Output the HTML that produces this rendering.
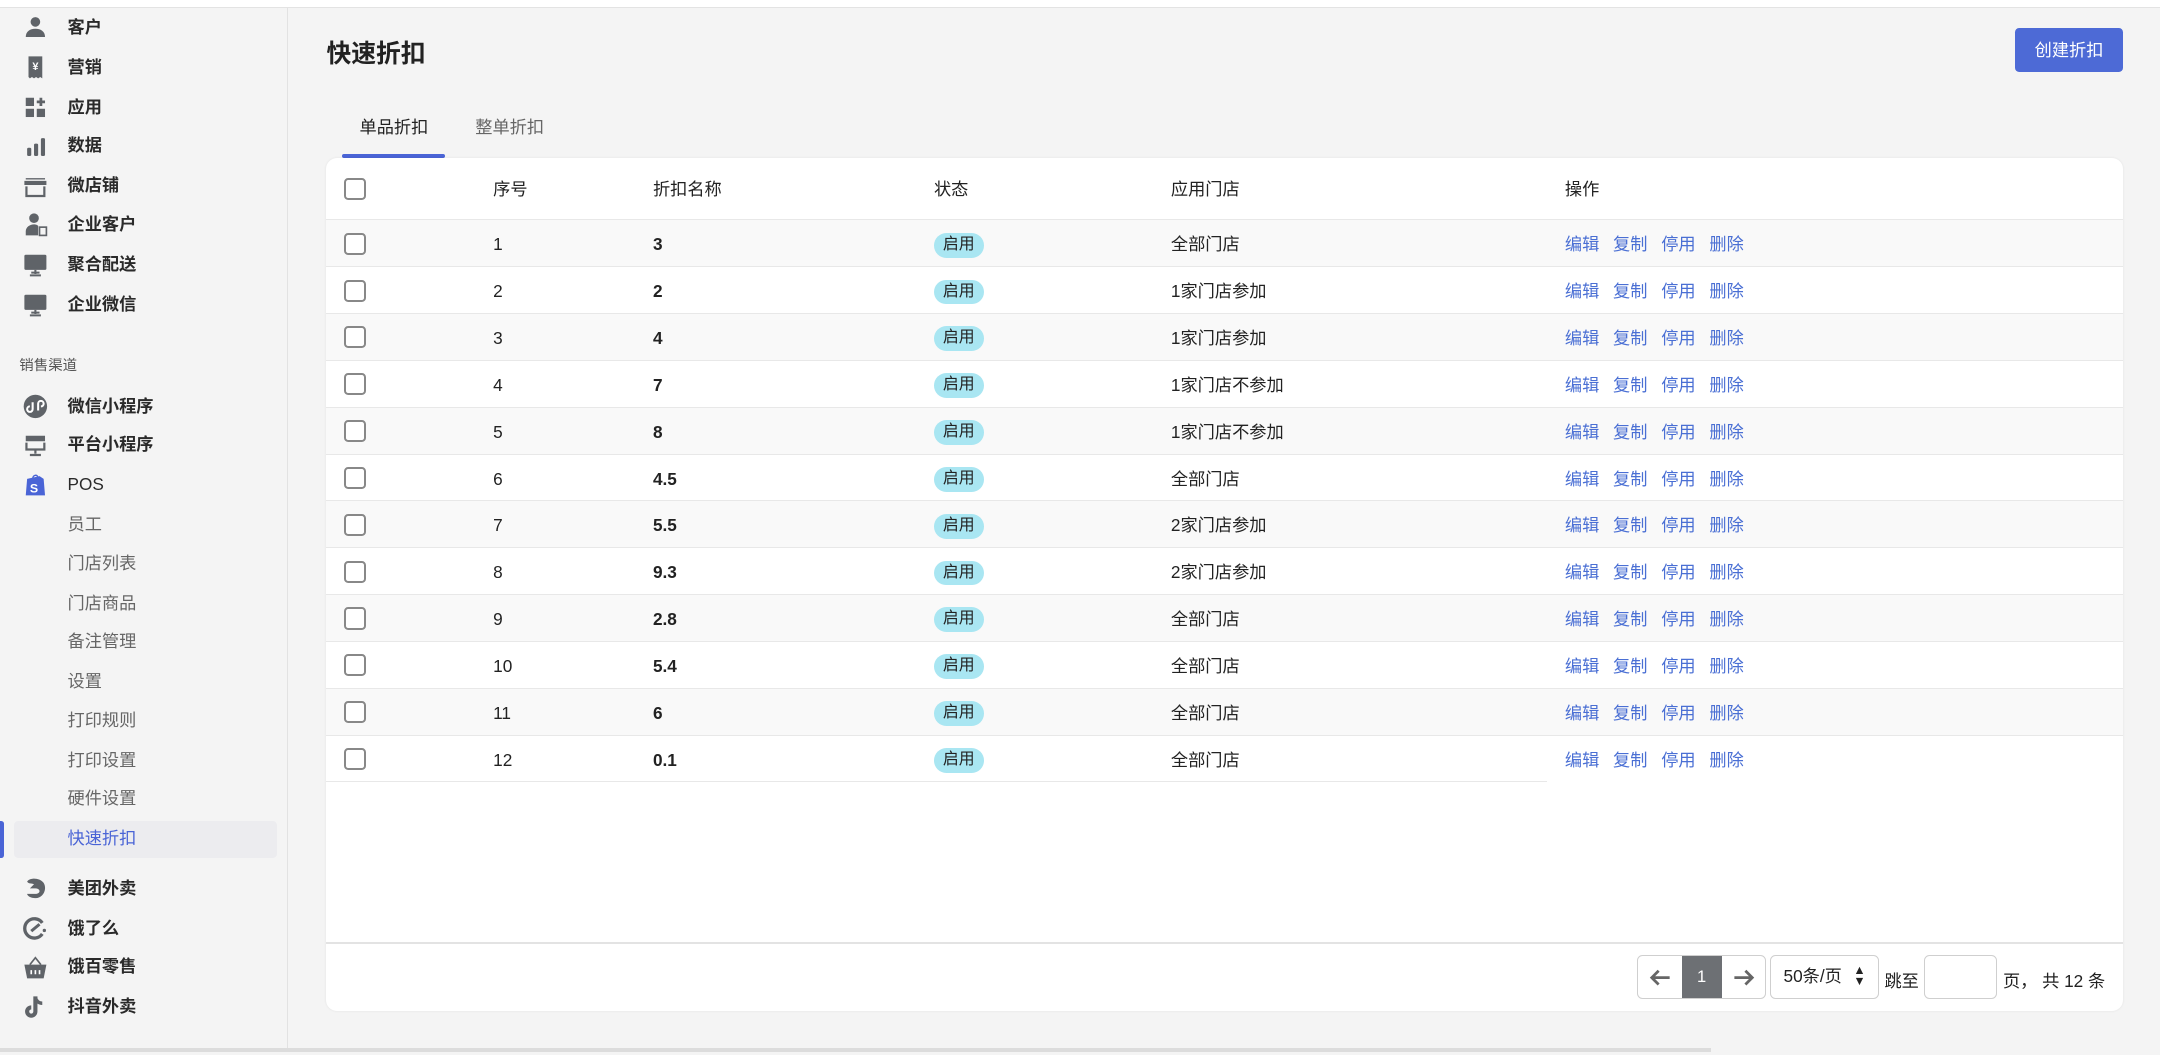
<!DOCTYPE html>
<html><head><meta charset="utf-8"><style>
*{box-sizing:border-box;margin:0;padding:0}
html,body{width:2160px;height:1055px;overflow:hidden;background:#f4f4f4}
#w{zoom:1.377551;width:1568px;height:766px;position:relative;font-family:"Liberation Sans","Noto Sans CJK SC",sans-serif;color:#222;font-size:12px}
.abs{position:absolute}
#top{left:0;top:0;width:1568px;height:6px;background:#fff;border-bottom:1px solid #e3e3e3}
#side{left:0;top:6px;width:209px;height:756px;background:#f4f4f4;border-right:1px solid #e2e2e2}
.mi{position:absolute;left:0;height:20px;line-height:20px;font-weight:bold;font-size:12.5px;color:#2a2a2a}
.mi svg{position:absolute;left:17px;top:1px;width:18px;height:18px}
.mi span{position:absolute;left:49px;white-space:nowrap}
.si{position:absolute;left:49px;font-size:12.5px;color:#666;line-height:20px;white-space:nowrap}
#scroll{left:0;top:761px;width:1242px;height:3px;background:#dcdcdc}
h1{position:absolute;left:237px;top:25px;font-size:18px;font-weight:bold;color:#222}
#btn{left:1463px;top:20px;width:78px;height:32px;background:#4d6ad6;border-radius:3px;color:#fff;font-size:12.5px;line-height:32px;text-align:center}
.tab{position:absolute;top:82px;font-size:12.5px;color:#222}
#card{left:237px;top:115px;width:1304px;height:619px;background:#fff;border-radius:8px;box-shadow:0 0 2px rgba(0,0,0,.08)}
.row{position:absolute;left:0;width:1304px;height:34px;border-bottom:1px solid #e8e8e8;line-height:36px;font-size:12.5px}
.row.s{background:#f9f9f9}
.row div{position:absolute;top:0;white-space:nowrap}
.cb{position:absolute;left:13px;top:9px;width:16px;height:16px;border:1.5px solid #888;border-radius:3px;background:#fff}
.bd{top:9px!important;height:18px;line-height:18px;width:36px;background:#a9e6f2;border-radius:9px;text-align:center;font-size:11.5px}
.op{color:#4a6fd4}
.op b{font-weight:normal;margin-right:10px}
.pg{position:absolute;border:1px solid #cfcfcf;border-radius:4px;background:#fff}
</style></head><body><div id="w">
<div class="abs" id="top"></div>
<div class="abs" id="side">
</div>
<div class="mi" style="top:10px"><svg viewBox="0 0 18 18"><circle cx="9" cy="5" r="3.5" fill="#5f6368"/><path d="M2 16c0-4 3-6 7-6s7 2 7 6z" fill="#5f6368"/></svg><span>客户</span></div>
<div class="mi" style="top:39px"><svg viewBox="0 0 18 18"><path d="M4 1h10v16l-1.5-1-1.5 1-1.5-1-1.5 1-1.5-1-1.5 1-1 -1z" fill="#5f6368"/><text x="9" y="11" font-size="8" fill="#fff" text-anchor="middle" font-family="Liberation Sans">¥</text></svg><span>营销</span></div>
<div class="mi" style="top:68px"><svg viewBox="0 0 18 18"><rect x="2" y="2" width="6" height="6" fill="#5f6368"/><rect x="2" y="10" width="6" height="6" fill="#5f6368"/><rect x="10" y="10" width="6" height="6" fill="#5f6368"/><path d="M13 2v6M10 5h6" stroke="#5f6368" stroke-width="2"/></svg><span>应用</span></div>
<div class="mi" style="top:96px"><svg viewBox="0 0 18 18"><rect x="3" y="10" width="3" height="6" rx="1" fill="#5f6368"/><rect x="8" y="7" width="3" height="9" rx="1" fill="#5f6368"/><rect x="13" y="3" width="3" height="13" rx="1" fill="#5f6368"/></svg><span>数据</span></div>
<div class="mi" style="top:125px"><svg viewBox="0 0 18 18"><path d="M2 3h14v1H2zM1 5h16v3H1z" fill="#5f6368"/><path d="M2.5 9v7h13V9" stroke="#5f6368" stroke-width="1.6" fill="none"/></svg><span>微店铺</span></div>
<div class="mi" style="top:153px"><svg viewBox="0 0 18 18"><circle cx="8" cy="4.5" r="3.5" fill="#5f6368"/><path d="M2 17v-3c0-3 3-5 6-5 2 0 3 1 3 1v7z" fill="#5f6368"/><rect x="12" y="11" width="5" height="6" fill="none" stroke="#5f6368" stroke-width="1.2"/></svg><span>企业客户</span></div>
<div class="mi" style="top:182px"><svg viewBox="0 0 18 18"><rect x="1" y="2" width="16" height="11" rx="1" fill="#5f6368"/><path d="M6 15h6M5 17h8M9 13v3" stroke="#5f6368" stroke-width="1.5"/></svg><span>聚合配送</span></div>
<div class="mi" style="top:211px"><svg viewBox="0 0 18 18"><rect x="1" y="2" width="16" height="11" rx="1" fill="#5f6368"/><path d="M6 15h6M5 17h8M9 13v3" stroke="#5f6368" stroke-width="1.5"/></svg><span>企业微信</span></div>
<div class="si" style="left:14px;top:256px;font-size:10.5px;color:#555">销售渠道</div>
<div class="mi" style="top:285px"><svg viewBox="0 0 18 18"><circle cx="9" cy="9" r="8.5" fill="#5f6368"/><path d="M7 6v5a2 2 0 1 1-2-2M11 12V7a2 2 0 1 1 2 2" stroke="#fff" stroke-width="1.5" fill="none"/></svg><span>微信小程序</span></div>
<div class="mi" style="top:313px"><svg viewBox="0 0 18 18"><path d="M2 2h14v4H2z" fill="#5f6368"/><path d="M2.5 7v5h13V7" stroke="#5f6368" stroke-width="1.6" fill="none"/><path d="M9 12v3M5 16h8" stroke="#5f6368" stroke-width="1.6"/></svg><span>平台小程序</span></div>
<div class="mi" style="top:342px"><svg viewBox="0 0 18 18"><path d="M3 5l9-2 3 2 1 12H2z" fill="#4a64d6"/><path d="M7 5c0-3 4-4 4 0" stroke="#4a64d6" fill="none"/><text x="8" y="15" font-size="9" font-weight="bold" fill="#fff" text-anchor="middle" font-family="Liberation Sans">S</text></svg><span style="font-weight:normal">POS</span></div>
<div class="si" style="top:371px">员工</div>
<div class="si" style="top:399px">门店列表</div>
<div class="si" style="top:428px">门店商品</div>
<div class="si" style="top:456px">备注管理</div>
<div class="si" style="top:485px">设置</div>
<div class="si" style="top:513px">打印规则</div>
<div class="si" style="top:542px">打印设置</div>
<div class="si" style="top:570px">硬件设置</div>
<div class="abs" style="left:10px;top:596px;width:191px;height:27px;background:#ececef;border-radius:3px"></div>
<div class="abs" style="left:0;top:596px;width:3px;height:27px;background:#4a64d6;border-radius:0 2px 2px 0"></div>
<div class="si" style="top:599px;color:#4a64d6">快速折扣</div>
<div class="mi" style="top:635px"><svg viewBox="0 0 18 18"><path d="M3 4c2-3 9-3 12 1 3 5-1 12-7 11-3 0-5-2-5-3h6c2 0 3-1 3-2s-1-2-3-2H5l3-3c-2-1-4 0-5-2z" fill="#5f6368"/></svg><span>美团外卖</span></div>
<div class="mi" style="top:664px"><svg viewBox="0 0 18 18"><path d="M14 5a7 7 0 1 0 0 8" stroke="#5f6368" stroke-width="2.4" fill="none"/><path d="M6 11l6-5" stroke="#5f6368" stroke-width="2.2"/><circle cx="15.5" cy="10.5" r="1.2" fill="#5f6368"/></svg><span>饿了么</span></div>
<div class="mi" style="top:692px"><svg viewBox="0 0 18 18"><path d="M5 7l4-5 4 5" stroke="#5f6368" fill="none" stroke-width="1.2"/><path d="M1 7h16l-2 10H3z" fill="#5f6368"/><path d="M6 11v3M9 11v3M12 11v3" stroke="#fff" stroke-width="1.2"/></svg><span>饿百零售</span></div>
<div class="mi" style="top:721px"><svg viewBox="0 0 18 18"><path d="M9 1v11a3 3 0 1 1-3-3" stroke="#5f6368" stroke-width="3" fill="none"/><path d="M9 2c1 3 3 4 5 4" stroke="#5f6368" stroke-width="2.5" fill="none"/></svg><span>抖音外卖</span></div>
<div class="abs" id="scroll"></div>

<h1>快速折扣</h1>
<div class="abs" id="btn">创建折扣</div>
<div class="tab" style="left:261px">单品折扣</div>
<div class="tab" style="left:345px;color:#666">整单折扣</div>
<div class="abs" style="left:248px;top:112px;width:75px;height:3px;background:#4a64d6;border-radius:2px"></div>

<div class="abs" id="card">
<div class="row" style="top:0;height:45px;line-height:46px"><span class="cb" style="top:14px"></span><div style="left:121px">序号</div><div style="left:237px">折扣名称</div><div style="left:441px">状态</div><div style="left:613px">应用门店</div><div style="left:899px">操作</div></div>
<div class="row s" style="top:45px"><span class="cb"></span><div style="left:121px">1</div><div style="left:237px;font-weight:bold">3</div><div class="bd" style="left:441px">启用</div><div style="left:613px">全部门店</div><div class="op" style="left:899px"><b>编辑</b><b>复制</b><b>停用</b><b>删除</b></div></div>
<div class="row" style="top:79px"><span class="cb"></span><div style="left:121px">2</div><div style="left:237px;font-weight:bold">2</div><div class="bd" style="left:441px">启用</div><div style="left:613px">1家门店参加</div><div class="op" style="left:899px"><b>编辑</b><b>复制</b><b>停用</b><b>删除</b></div></div>
<div class="row s" style="top:113px"><span class="cb"></span><div style="left:121px">3</div><div style="left:237px;font-weight:bold">4</div><div class="bd" style="left:441px">启用</div><div style="left:613px">1家门店参加</div><div class="op" style="left:899px"><b>编辑</b><b>复制</b><b>停用</b><b>删除</b></div></div>
<div class="row" style="top:147px"><span class="cb"></span><div style="left:121px">4</div><div style="left:237px;font-weight:bold">7</div><div class="bd" style="left:441px">启用</div><div style="left:613px">1家门店不参加</div><div class="op" style="left:899px"><b>编辑</b><b>复制</b><b>停用</b><b>删除</b></div></div>
<div class="row s" style="top:181px"><span class="cb"></span><div style="left:121px">5</div><div style="left:237px;font-weight:bold">8</div><div class="bd" style="left:441px">启用</div><div style="left:613px">1家门店不参加</div><div class="op" style="left:899px"><b>编辑</b><b>复制</b><b>停用</b><b>删除</b></div></div>
<div class="row" style="top:215px"><span class="cb"></span><div style="left:121px">6</div><div style="left:237px;font-weight:bold">4.5</div><div class="bd" style="left:441px">启用</div><div style="left:613px">全部门店</div><div class="op" style="left:899px"><b>编辑</b><b>复制</b><b>停用</b><b>删除</b></div></div>
<div class="row s" style="top:249px"><span class="cb"></span><div style="left:121px">7</div><div style="left:237px;font-weight:bold">5.5</div><div class="bd" style="left:441px">启用</div><div style="left:613px">2家门店参加</div><div class="op" style="left:899px"><b>编辑</b><b>复制</b><b>停用</b><b>删除</b></div></div>
<div class="row" style="top:283px"><span class="cb"></span><div style="left:121px">8</div><div style="left:237px;font-weight:bold">9.3</div><div class="bd" style="left:441px">启用</div><div style="left:613px">2家门店参加</div><div class="op" style="left:899px"><b>编辑</b><b>复制</b><b>停用</b><b>删除</b></div></div>
<div class="row s" style="top:317px"><span class="cb"></span><div style="left:121px">9</div><div style="left:237px;font-weight:bold">2.8</div><div class="bd" style="left:441px">启用</div><div style="left:613px">全部门店</div><div class="op" style="left:899px"><b>编辑</b><b>复制</b><b>停用</b><b>删除</b></div></div>
<div class="row" style="top:351px"><span class="cb"></span><div style="left:121px">10</div><div style="left:237px;font-weight:bold">5.4</div><div class="bd" style="left:441px">启用</div><div style="left:613px">全部门店</div><div class="op" style="left:899px"><b>编辑</b><b>复制</b><b>停用</b><b>删除</b></div></div>
<div class="row s" style="top:385px"><span class="cb"></span><div style="left:121px">11</div><div style="left:237px;font-weight:bold">6</div><div class="bd" style="left:441px">启用</div><div style="left:613px">全部门店</div><div class="op" style="left:899px"><b>编辑</b><b>复制</b><b>停用</b><b>删除</b></div></div>
<div class="row" style="top:419px;width:886px"><span class="cb"></span><div style="left:121px">12</div><div style="left:237px;font-weight:bold">0.1</div><div class="bd" style="left:441px">启用</div><div style="left:613px">全部门店</div><div class="op" style="left:899px"><b>编辑</b><b>复制</b><b>停用</b><b>删除</b></div></div>
<div class="abs" style="left:0;top:569px;width:1304px;height:1px;background:#e3e3e3"></div>
<div class="pg" style="left:951px;top:578px;width:94px;height:32px;overflow:hidden">
<svg class="abs" style="left:8px;top:9px" width="16" height="14" viewBox="0 0 16 14"><path d="M15 7H2M7 2L2 7l5 5" stroke="#666" stroke-width="2" fill="none"/></svg>
<div class="abs" style="left:32px;top:0;width:29px;height:32px;background:#6d7074;color:#fff;text-align:center;line-height:30px;font-size:12px">1</div>
<svg class="abs" style="left:69px;top:9px" width="16" height="14" viewBox="0 0 16 14"><path d="M1 7h13M9 2l5 5-5 5" stroke="#666" stroke-width="2" fill="none"/></svg></div>
<div class="pg" style="left:1048px;top:578px;width:79px;height:32px;line-height:30px;padding-left:9px;font-size:12.5px">50条/页<span style="position:absolute;right:9px;top:0;font-size:9px;line-height:8px;padding-top:7px">▲<br>▼</span></div>
<div class="abs" style="left:1131px;top:587px;font-size:12.5px">跳至</div>
<div class="pg" style="left:1160px;top:578px;width:53px;height:32px"></div>
<div class="abs" style="left:1217px;top:587px;font-size:12.5px">页， 共 12 条</div>
</div>
</div></body></html>
